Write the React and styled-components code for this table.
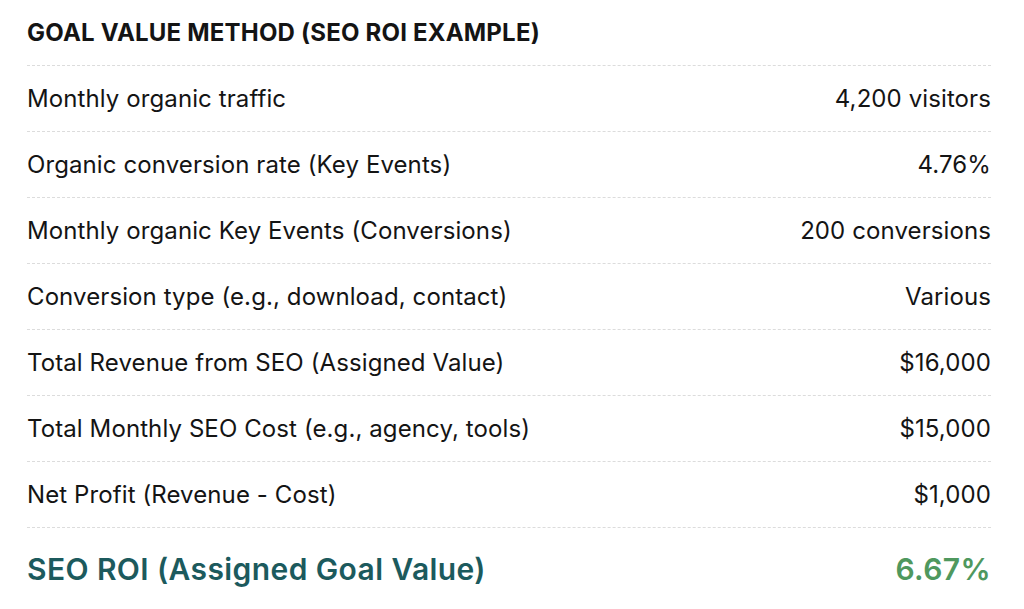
import React from "react";
import styled, { createGlobalStyle } from "styled-components";

const Global = createGlobalStyle`
  body {
    margin: 0;
    background: #ffffff;
    font-family: Inter, "Noto Sans", "Liberation Sans", sans-serif;
    color: #141414;
  }
`;

const Table = styled.div`
  width: 964px;
  margin-left: 27px;
`;

const Title = styled.h2`
  margin: 0;
  height: 65px;
  display: flex;
  align-items: center;
  font-size: 24px;
  font-weight: 650;
  letter-spacing: 0.2px;
  border-bottom: 1px dashed #dcdcdc;
`;

const Row = styled.div`
  display: flex;
  justify-content: space-between;
  align-items: center;
  height: ${props => (props.total ? "80px" : "65px")};
  padding-top: ${props => (props.total ? "1px" : "0")};
  border-bottom: ${props => (props.total ? "none" : "1px dashed #dcdcdc")};
  font-size: ${props => (props.total ? "30px" : "24px")};
  font-weight: ${props => (props.total ? 600 : 400)};
  letter-spacing: ${props => (props.total ? "0.4px" : "0.1px")};
`;

const Label = styled.span`
  color: ${props => (props.total ? "#1c5a5d" : "#141414")};
`;

const Value = styled.span`
  color: ${props => (props.total ? "#4f985e" : "#141414")};
`;

const rows = [
  ["Monthly organic traffic", "4,200 visitors"],
  ["Organic conversion rate (Key Events)", "4.76%"],
  ["Monthly organic Key Events (Conversions)", "200 conversions"],
  ["Conversion type (e.g., download, contact)", "Various"],
  ["Total Revenue from SEO (Assigned Value)", "$16,000"],
  ["Total Monthly SEO Cost (e.g., agency, tools)", "$15,000"],
  ["Net Profit (Revenue - Cost)", "$1,000"]
];

const App = () => (
  <>
    <Global />
    <Table>
      <Title>GOAL VALUE METHOD (SEO ROI EXAMPLE)</Title>
      {rows.map(([label, value]) => (
        <Row key={label}>
          <Label>{label}</Label>
          <Value>{value}</Value>
        </Row>
      ))}
      <Row total>
        <Label total>SEO ROI (Assigned Goal Value)</Label>
        <Value total>6.67%</Value>
      </Row>
    </Table>
  </>
);

export default App;
